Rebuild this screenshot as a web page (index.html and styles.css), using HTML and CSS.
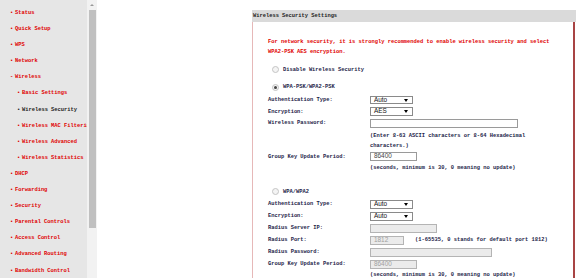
FILE: index.html
```html
<!DOCTYPE html>
<html lang="en">
<head>
    <meta charset="UTF-8">
    <title>Wireless Security</title>
    <link rel="stylesheet" href="styles.css">
</head>
<body>
    <div class="frame">
        <ul class="menu">
            <li>Status</li>
            <li>Quick Setup</li>
            <li>WPS</li>
            <li>Network</li>
            <li class="open">Wireless</li>
            <li class="sub">Basic Settings</li>
            <li class="sub current">Wireless Security</li>
            <li class="sub">Wireless MAC Filtering</li>
            <li class="sub">Wireless Advanced</li>
            <li class="sub">Wireless Statistics</li>
            <li>DHCP</li>
            <li>Forwarding</li>
            <li>Security</li>
            <li>Parental Controls</li>
            <li>Access Control</li>
            <li>Advanced Routing</li>
            <li>Bandwidth Control</li>
        </ul>

        <div class="scrollbar">
            <div class="arrow"></div>
            <div class="thumb"></div>
        </div>

        <div class="main">
            <div class="panel">
                <div class="panel-head">Wireless Security Settings</div>
                <div class="panel-body">
                    <p class="warn">For network security, it is strongly recommended to enable wireless security and select WPA2-PSK AES encryption.</p>

                    <div class="opt first"><span class="radio"></span>Disable Wireless Security</div>

                    <div class="opt"><span class="radio on"></span>WPA-PSK/WPA2-PSK</div>
                    <div class="form">
                        <div class="row"><span class="lbl">Authentication Type:</span><span class="sel">Auto<i></i></span></div>
                        <div class="row"><span class="lbl">Encryption:</span><span class="sel">AES<i></i></span></div>
                        <div class="row"><span class="lbl">Wireless Password:</span><span class="inp w148"></span></div>
                        <div class="note two">(Enter 8-63 ASCII characters or 8-64 Hexadecimal characters.)</div>
                        <div class="row"><span class="lbl">Group Key Update Period:</span><span class="inp w47">86400</span></div>
                        <div class="note">(seconds, minimum is 30, 0 meaning no update)</div>
                    </div>

                    <div class="opt gap"><span class="radio"></span>WPA/WPA2</div>
                    <div class="form wide">
                        <div class="row"><span class="lbl">Authentication Type:</span><span class="sel">Auto<i></i></span></div>
                        <div class="row"><span class="lbl">Encryption:</span><span class="sel">Auto<i></i></span></div>
                        <div class="row"><span class="lbl">Radius Server IP:</span><span class="inp off w67"></span></div>
                        <div class="row"><span class="lbl">Radius Port:</span><span class="inp off w34">1812</span><span class="hint">(1-65535, 0 stands for default port 1812)</span></div>
                        <div class="row"><span class="lbl">Radius Password:</span><span class="inp off w122"></span></div>
                        <div class="row"><span class="lbl">Group Key Update Period:</span><span class="inp off w47">86400</span></div>
                        <div class="note">(seconds, minimum is 30, 0 meaning no update)</div>
                    </div>
                </div>
            </div>
        </div>
    </div>
</body>
</html>
```

FILE: styles.css
```css
:root {
    --red: #e00000;
    --navy: #1c1c48;
    --side-bg: #e6e6e6;
}

html, body {
    margin: 0;
    height: 100%;
    overflow: hidden;
    background: #fff;
}

body {
    font-family: "Liberation Mono", "DejaVu Sans Mono", monospace;
    font-size: 5.4px;
    font-weight: bold;
    color: var(--navy);
}

.frame {
    display: flex;
    height: 278px;
    overflow: hidden;
}

/* left menu */
.menu {
    list-style: none;
    margin: 0;
    padding: 5px 0 0 0;
    width: 87px;
    flex-shrink: 0;
    background: var(--side-bg);
    color: var(--red);
    line-height: 16.1px;
    white-space: nowrap;
    overflow: hidden;
}

.menu li {
    padding-left: 15px;
    position: relative;
}

.menu li::before {
    content: "\2022";
    position: absolute;
    left: 10px;
}

.menu li.open::before {
    content: "-";
}

.menu li.sub {
    padding-left: 22px;
}

.menu li.sub::before {
    left: 17px;
}

.menu li.current {
    color: #222;
}

/* fake frame scrollbar */
.scrollbar {
    width: 10px;
    flex-shrink: 0;
    background: #f2f2f2;
    display: flex;
    flex-direction: column;
    align-items: center;
}

.arrow {
    margin-top: 4px;
    width: 0;
    height: 0;
    border-left: 2px solid transparent;
    border-right: 2px solid transparent;
    border-bottom: 2px solid #999;
}

.thumb {
    margin-top: 4px;
    width: 7px;
    height: 218px;
    background: #c0c0c0;
}

/* main */
.main {
    flex: 1;
    display: flex;
    flex-direction: column;
    padding: 10px 0 0 155px;
    overflow: hidden;
}

.panel {
    flex: 1;
    display: flex;
    flex-direction: column;
    overflow: hidden;
}

.panel-head {
    height: 12px;
    line-height: 12px;
    padding-left: 1px;
    background: #dadada;
    color: #222;
}

.panel-body {
    flex: 1;
    border-left: 1px solid #e6b8b8;
    border-right: 2px solid #a84444;
    margin-right: 1px;
    padding: 16px 0 0 15px;
    overflow: hidden;
}

.warn {
    margin: 0;
    color: var(--red);
    line-height: 9.6px;
    width: 290px;
}

.opt {
    display: flex;
    align-items: center;
    height: 12px;
    margin-top: 5.5px;
    padding-left: 4px;
}

.opt.first {
    margin-top: 6.8px;
}

.opt.gap {
    margin-top: 11.6px;
}

.radio {
    width: 5px;
    height: 5px;
    border: 1px solid #c4c4c4;
    border-radius: 50%;
    background: #f4f4f4;
    margin-right: 4px;
    display: flex;
    align-items: center;
    justify-content: center;
}

.radio.on::after {
    content: "";
    width: 3px;
    height: 3px;
    border-radius: 50%;
    background: #444;
}

.form {
    margin-top: 0.7px;
}

.row {
    display: flex;
    align-items: center;
    height: 11.7px;
}

.wide .row {
    height: 12px;
}

.lbl {
    width: 102px;
    flex-shrink: 0;
}

.sel,
.inp {
    box-sizing: border-box;
    height: 8.5px;
    border: 1px solid #8a8a8a;
    background: #fff;
    font-family: "Liberation Sans", Arial, sans-serif;
    font-weight: normal;
    font-size: 6.4px;
    line-height: 6.5px;
    color: #111;
    padding-left: 3px;
}

.sel {
    width: 43px;
    display: flex;
    align-items: center;
    justify-content: space-between;
    padding-right: 4px;
}

.sel i {
    width: 0;
    height: 0;
    border-left: 2px solid transparent;
    border-right: 2px solid transparent;
    border-top: 3px solid #000;
}

.inp {
    border-color: #9a9a9a;
    color: #444;
}

.inp.off {
    background: #ebebeb;
    border-color: #b4b4b4;
    color: #a0a0a0;
}

.w34 { width: 34px; }
.w47 { width: 47px; }
.w67 { width: 67px; }
.w122 { width: 122px; }
.w148 { width: 148px; }

.hint {
    margin-left: 11px;
}

.note {
    padding-left: 102px;
    height: 11.7px;
    line-height: 11.7px;
}

.note.two {
    height: auto;
    line-height: 9.3px;
    padding-top: 3px;
    width: 170px;
}
```
